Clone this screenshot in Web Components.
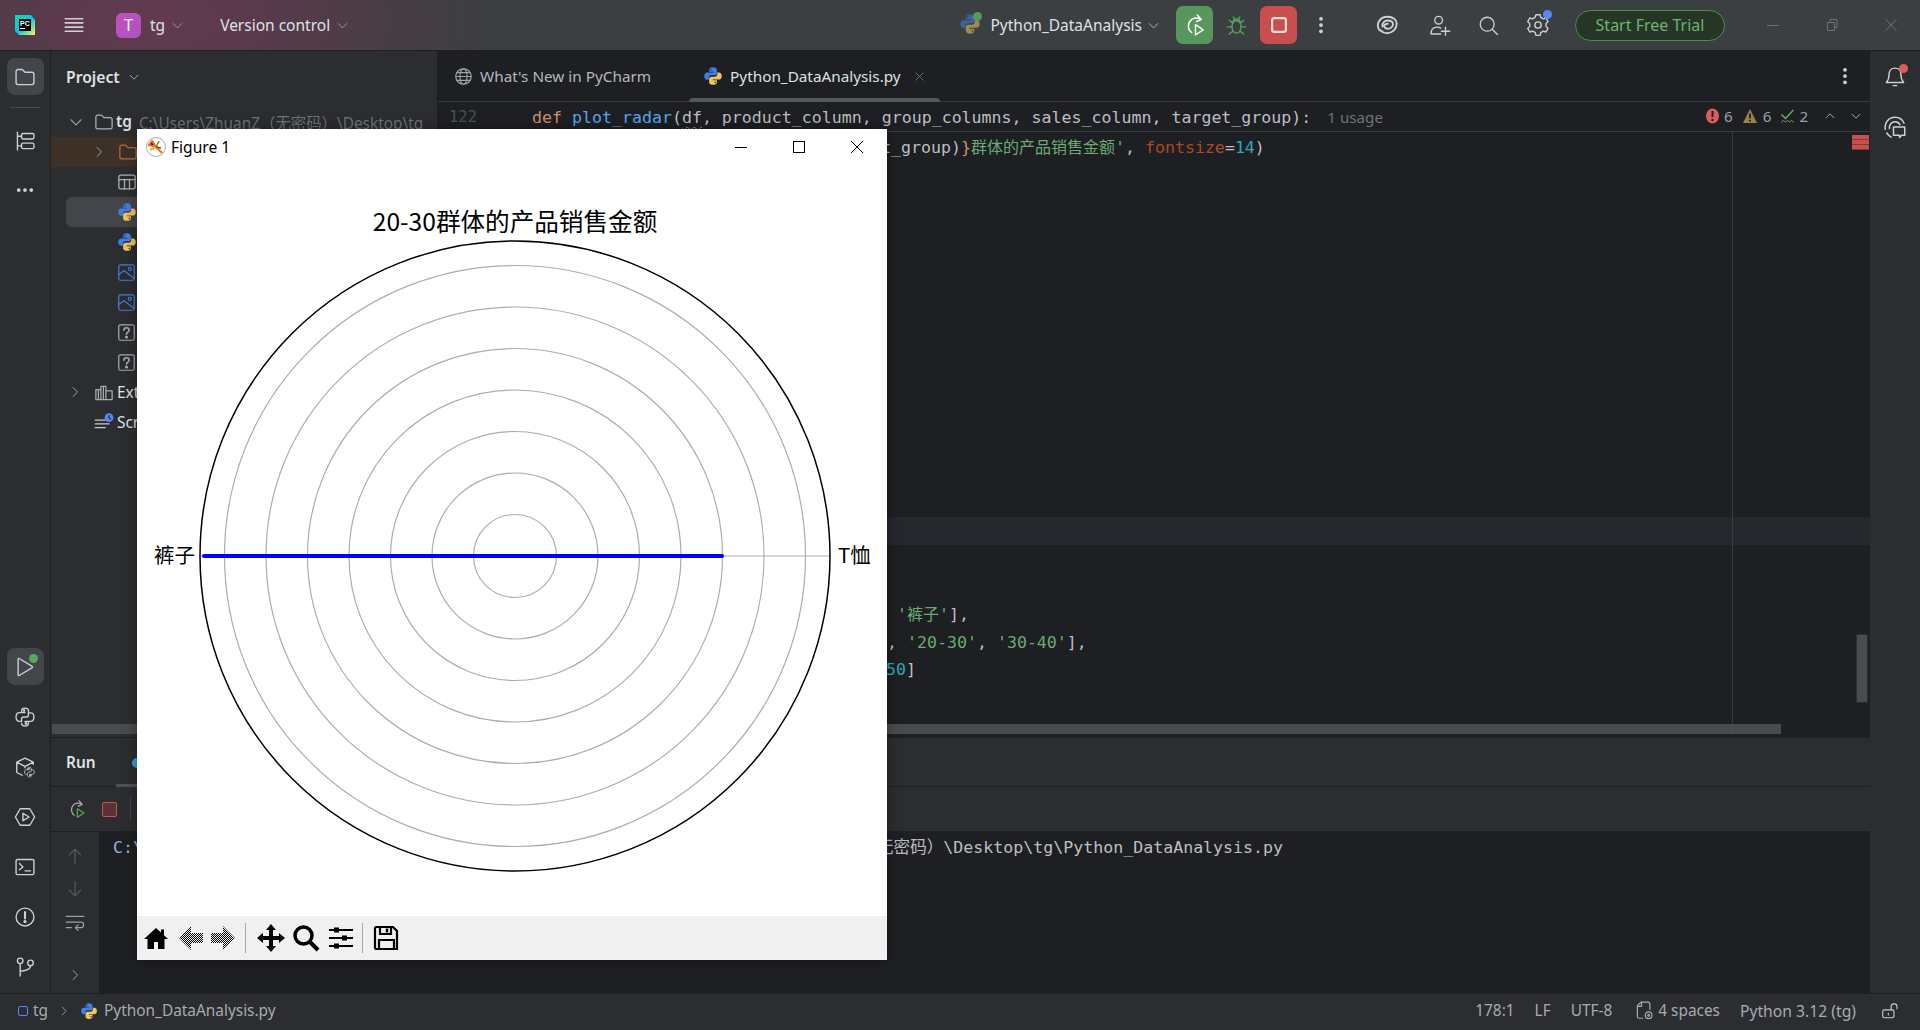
<!DOCTYPE html>
<html lang="zh"><head><meta charset="utf-8"><title>PyCharm</title>
<style>
html,body{margin:0;height:100%;overflow:hidden;background:#1e1f22}
body{font-family:"Noto Sans","Noto Sans CJK SC",sans-serif}
</style></head>
<body>
<ide-app></ide-app>
<script>
const UI='"Noto Sans","Noto Sans CJK SC",sans-serif';
const MONO='"DejaVu Sans Mono","Noto Sans CJK SC",monospace';
const PY='<path fill="#3d81e8" d="M8 1C5.600 1 4.900 2 4.900 3.100v1.500H8.200v.6H3.300C2 5.200 1 6.300 1 8.100c0 1.800 1 2.800 2.200 2.800h1.400V9.400c0-1.100 1-2 2.100-2h2.700c1 0 1.700-.8 1.700-1.700V3.100C11.100 2 10 1 8 1z"/><circle cx="6.200" cy="2.900" r=".6" fill="#2b2d30"/><path fill="#f2c55c" d="M8 15c2.400 0 3.100-1 3.100-2.100v-1.500H7.800v-.6h4.900c1.300 0 2.300-1.100 2.300-2.900 0-1.800-1-2.800-2.200-2.800h-1.400v1.500c0 1.100-1 2-2.100 2H6.600c-1 0-1.700.8-1.700 1.700v2.600C4.900 14 6 15 8 15z"/><circle cx="9.800" cy="13.100" r=".6" fill="#2b2d30"/>';
const OUTPY='<path d="M5.500 4.800V3.500c0-1.300 1-2 2.500-2s2.500.7 2.500 2v3c0 .9-.7 1.500-1.500 1.500H7c-.9 0-1.500.7-1.500 1.500v1.700H4c-1.500 0-2.500-1.200-2.500-3.200S2.500 4.800 4 4.800h4"/><path d="M10.500 11.200v1.300c0 1.300-1 2-2.500 2s-2.500-.7-2.500-2M10.500 5H12c1.500 0 2.500 1 2.500 3s-1 3.200-2.500 3.200H8"/><circle cx="7.300" cy="3.300" r=".5" fill="currentColor"/><circle cx="8.700" cy="12.700" r=".5" fill="currentColor"/>';
const ICONS={
 folder:'<path d="M1.500 4A1.500 1.500 0 0 1 3 2.500h3l2 2h5A1.500 1.500 0 0 1 14.500 6v6A1.500 1.500 0 0 1 13 13.500H3A1.500 1.500 0 0 1 1.500 12z"/>',
 structure:'<path d="M2.500 1.500v13M2.500 4.500h3M2.500 11.500h3"/><rect x="5.500" y="2.500" width="9" height="4" rx="1"/><rect x="5.500" y="9.500" width="9" height="4" rx="1"/>',
 more:'<circle cx="3" cy="8" r="1" fill="currentColor"/><circle cx="8" cy="8" r="1" fill="currentColor"/><circle cx="13" cy="8" r="1" fill="currentColor"/>',
 vmore:'<circle cx="8" cy="3" r="1" fill="currentColor"/><circle cx="8" cy="8" r="1" fill="currentColor"/><circle cx="8" cy="13" r="1" fill="currentColor"/>',
 run:'<path d="M3 2.200v11.600a.5.5 0 0 0 .8.4l9.500-5.800a.5.5 0 0 0 0-.8L3.800 1.800a.5.5 0 0 0-.8.4z"/>',
 pyconsole:OUTPY,
 packages:'<path d="M6 14 2 12V4.500L8 1.500l6 3v1.500M2 4.500l6 3 6-3M8 7.500v1"/><g transform="translate(6.800 7.300) scale(.55)">'+OUTPY+'</g>',
 services:'<path d="M4.500 2h7L15 8l-3.500 6h-7L1 8z"/><path d="M6.500 5.300v5.400L11 8z"/>',
 terminal:'<rect x="1.500" y="2.500" width="13" height="11" rx="1"/><path d="M4 5.500 6.500 8 4 10M8 10.800h4"/>',
 problems:'<circle cx="8" cy="8" r="6.500"/><path d="M8 4.300v4.700" stroke-width="1.500"/><circle cx="8" cy="11.300" r=".7" fill="currentColor"/>',
 git:'<circle cx="4.500" cy="3.500" r="2"/><circle cx="12" cy="5" r="2"/><path d="M4.500 5.500v9M4.500 11c4 0 7.500-1.500 7.500-4"/>',
 down:'<path d="m3.500 6 4.500 4.500L12.500 6"/>',
 up:'<path d="m3.500 10 4.500-4.500L12.500 10"/>',
 right:'<path d="m6 3.500 4.500 4.500L6 12.500"/>',
 close:'<path d="m3.500 3.500 9 9M12.500 3.500l-9 9"/>',
 burger:'<path d="M1 3h14M1 6.300h14M1 9.700h14M1 13h14" stroke-width="1.300"/>',
 table:'<rect x="1.500" y="2.500" width="13" height="11" rx="1.500"/><path d="M1.500 6h13M6 6v7.500M10 6v7.500"/>',
 image:'<rect x="1.500" y="1.500" width="13" height="13" rx="1.500"/><path d="M1.500 9.500 6 6.500l8.500 6.500"/><circle cx="10.800" cy="5" r="1.300"/>',
 unknown:'<rect x="1.500" y="1.500" width="13" height="13" rx="1.500"/><path d="M5.800 6.200C5.800 4.800 6.800 4 8 4s2.200.8 2.200 2c0 1.700-2.200 1.700-2.200 3.500" stroke-width="1.400"/><circle cx="8" cy="11.800" r=".8" fill="currentColor"/>',
 libs:'<path d="M1.500 6h4v8h-4zM5.500 3.500h4V14h-4zM9.500 7h5v7h-5zM3.500 6v8M7.500 3.500V14"/>',
 scratch:'<path d="M1 6.500h8M1 9.500h11M1 12.500h8"/><circle cx="12" cy="4.500" r="3.500" fill="#548af7" stroke="none"/><path d="M12 2.800v2l1.300.8" stroke="#2b2d30"/>',
 globe:'<circle cx="8" cy="8" r="6.500"/><path d="M1.500 8h13M2.500 4.700h11M2.500 11.300h11"/><ellipse cx="8" cy="8" rx="3" ry="6.500"/>',
 rerun:'<path d="M12 4.300A5.300 5.300 0 1 0 5.800 13M9.500 1.300l2.700 3-3.200 1.400"/><path stroke="var(--play,currentColor)" d="M8.300 7.800v6.800l5.200-3.400z"/>',
 bug:'<ellipse cx="8" cy="9" rx="3.500" ry="4.800"/><path d="M5.300 5.500C5.500 4 6.500 3 8 3s2.500 1 2.700 2.500M4.500 9H1M15 9h-3.500M5 6 2.500 4M11 6l2.500-2M5 12.500l-2.500 2M11 12.500l2.500 2M5.500 1.500l1 1.500M10.500 1.500l-1 1.500"/>',
 swirl:'<g stroke-width="1.250"><path d="M3 11.500C.5 8 2.500 2.500 8.500 2.500c3.500 0 6 2 6 4.500 0 3.500-3 6.500-6.500 6.500-2 0-3.500-1-4.500-2"/><path d="M5 9c-.5-2.500 1.500-4 3.500-4 2 0 3.500 1 3.500 2.500s-1.500 3-3.500 3c-1.500 0-2.500-1-2.300-2 .2-.8 1-1.300 2.300-1.300"/></g>',
 adduser:'<circle cx="7" cy="4.500" r="2.800"/><path d="M1.500 14.500c0-2.500.8-5 4.200-5 1 0 2 .2 2.800.8M1.500 14.500h7M12 9.500v6M9 12.500h6"/>',
 search:'<circle cx="7" cy="7" r="5.300"/><path d="m11 11 3.800 3.800"/>',
 gear:'<path d="M6.500 1.500h3l.5 2 1.800 1 2-.6 1.500 2.600-1.500 1.500v2l1.500 1.500-1.500 2.600-2-.6-1.800 1-.5 2h-3l-.5-2-1.800-1-2 .6L.5 11.500 2 10V8L.5 6.500 2 3.900l2 .6 1.800-1z" transform="translate(0 -1)"/><circle cx="8" cy="8" r="2.300"/>',
 bell:'<path d="M8 1.500c-2.800 0-4.300 2-4.300 4.500 0 3-.7 4.500-2 6h12.600c-1.300-1.500-2-3-2-6 0-2.500-1.500-4.500-4.300-4.500zM6.700 14.300h2.600"/>',
 assist:'<path d="M1.500 9.500C.8 5 4 1.500 8 1.500c3 0 5 1.500 6 4M4.300 9c-.3-2.500 1.400-4.500 3.700-4.500 1.500 0 2.700.7 3.300 2"/><path d="M7 8h7.500v5.500h-2L11 15v-1.500H7z"/><path d="M2.500 12c1 1.500 2 2.300 3 2.800"/>',
 up2:'<path d="M8 14V2.500M3.500 7 8 2.500 12.500 7"/>',
 down2:'<path d="M8 2v11.500M3.500 9 8 13.500 12.500 9"/>',
 wrap:'<path d="M1 3.500h14M1 8h12c2.500 0 2.500 4.500 0 4.500H8.500M10.500 10.300 8.300 12.500l2.200 2.200M1 12.500h4"/>',
 filecfg:'<path d="M6.500 14.500h-3A1.500 1.500 0 0 1 2 13V4l3-3h6a1.500 1.500 0 0 1 1.500 1.500V7M5.500 1v3.500H2"/><circle cx="11.500" cy="12" r="2.800"/><circle cx="11.500" cy="12" r=".8"/>',
 lock:'<rect x="1.500" y="7" width="10" height="7" rx="1.500"/><path d="M9 7V4.300a2.600 2.600 0 0 1 5.200 0V6M6.500 10v1.500"/>',
 dotsq:'<rect x="3" y="3" width="10" height="10" rx="1.500" stroke-width="1.600"/>',
 check:'<path d="m2 7 3.500 3.500L13 2.500" stroke-width="1.700"/><path d="M1.500 14l2-1.500 2 1.500 2-1.500 2 1.500 2-1.500 2 1.500" stroke-width="1"/>'
};
function mk(name,css,html){
  const t=document.createElement('template');
  t.innerHTML='<style>'+css+'</style>'+html;
  customElements.define(name,class extends HTMLElement{
    constructor(){super();this.attachShadow({mode:'open'}).appendChild(t.content.cloneNode(true));}
  });
}
customElements.define('ide-icon',class extends HTMLElement{
  connectedCallback(){
    const n=this.getAttribute('name'),s=this.getAttribute('size')||20,c=this.getAttribute('color')||'#ced0d6';
    const r=this.shadowRoot||this.attachShadow({mode:'open'});
    r.innerHTML='<style>:host{display:inline-flex;flex:none;color:'+c+';width:'+s+'px;height:'+s+'px}svg{display:block;width:100%;height:100%;overflow:visible}</style><svg viewBox="0 0 16 16" fill="none" stroke="currentColor" stroke-width="1" stroke-linecap="round" stroke-linejoin="round">'+(n==='python'?'<g stroke="none">'+PY+'</g>':ICONS[n])+'</svg>';
  }
});
mk('ide-titlebar',`
:host{display:flex;align-items:center;height:50px;border-bottom:1px solid #1e1f22;color:#dfe1e5;font:15.500px ${UI};
 background:radial-gradient(ellipse 340px 150px at 150px 20px,#633a50 0,#5a3a4b 30%,rgba(60,63,65,0) 100%),#3c3f41}
.logo{width:20px;height:20px;margin-left:15px;flex:none}
.burger{margin-left:29px}
.av{margin-left:32px;width:25px;height:25px;border-radius:6px;background:linear-gradient(135deg,#c64fb6,#a955c5);display:flex;align-items:center;justify-content:center;color:#fff;font-size:16px}
.tg{margin-left:9px}
.chev{margin-left:5px}
.vc{margin-left:34px}
.right{margin-left:auto;display:flex;align-items:center;height:100%}
.pl{position:relative;width:22px;height:24px;margin-right:9px}
.pl i{position:absolute;right:-1px;top:-1px;width:9px;height:9px;border-radius:50%;background:#57965c}
.pl ide-icon{opacity:.55}
.btn{width:37px;height:38px;border-radius:7px;display:flex;align-items:center;justify-content:center}
.green{background:#57965c}
.red{background:#c94f4f}
.trial{margin:0 0 0 26px;width:148px;height:29px;border:1.500px solid #4e8a52;background:#253627;border-radius:16px;display:flex;align-items:center;justify-content:center;color:#6db46f;font-size:16px}
.win{display:flex;width:177px;margin-left:18px}
.win span{flex:1;display:flex;justify-content:center}
`,`
<svg class="logo" viewBox="0 0 20 20"><defs><linearGradient id="a" x1="0" y1="0" x2="1" y2="1"><stop offset="0" stop-color="#21d789"/><stop offset=".5" stop-color="#07c3f2"/><stop offset="1" stop-color="#fcf84a"/></linearGradient></defs><path d="M0 0h16l4 5v15H4l-4-4z" fill="url(#a)"/><rect x="4" y="4" width="12" height="12" fill="#000"/><text x="5" y="10.500" font-size="7" fill="#fff" font-family="Liberation Sans" font-weight="700">PC</text><rect x="5" y="13" width="5" height="1" fill="#fff"/></svg>
<ide-icon class="burger" name="burger" size="20"></ide-icon>
<div class="av">T</div><span class="tg">tg</span><ide-icon class="chev" name="down" size="15" color="#9da0a8"></ide-icon>
<span class="vc" style="margin-left:35px">Version control</span><ide-icon class="chev" name="down" size="15" color="#9da0a8"></ide-icon>
<div class="right">
 <div class="pl"><ide-icon name="python" size="22"></ide-icon><i></i></div>
 <span>Python_DataAnalysis</span><ide-icon style="margin:0 0 0 4px" name="down" size="15" color="#b4b8bf"></ide-icon>
 <div class="btn green" style="margin-left:15px"><ide-icon name="rerun" size="24" color="#fff"></ide-icon></div>
 <ide-icon style="margin:0 13px 0 13px" name="bug" size="21" color="#57a85c"></ide-icon>
 <div class="btn red"><ide-icon name="dotsq" size="22" color="#f4dede"></ide-icon></div>
 <ide-icon style="margin:0 0 0 14px" name="vmore" size="20"></ide-icon>
 <ide-icon style="margin:0 0 0 44px" name="swirl" size="24"></ide-icon>
 <ide-icon style="margin:0 0 0 30px" name="adduser" size="22"></ide-icon>
 <ide-icon style="margin:0 0 0 27px" name="search" size="21"></ide-icon>
 <span style="position:relative;display:inline-flex;margin-left:28px"><ide-icon name="gear" size="22"></ide-icon><i style="position:absolute;right:-3px;top:-4px;width:9px;height:9px;border-radius:50%;background:#548af7"></i></span>
 <div class="trial">Start Free Trial</div>
 <div class="win"><span><svg width="14" height="14"><path d="M1 7.500h12" stroke="#6f7275"/></svg></span><span><svg width="14" height="14" fill="none" stroke="#6f7275"><path d="M2.500 4.500h7v8h-7zM5 4.500v-3h7v8h-2.500"/></svg></span><span><svg width="14" height="14" stroke="#6f7275"><path d="m1.500 1 11 12M12.500 1l-11 12"/></svg></span></div>
</div>`);
mk('ide-toolstripe',`
:host{display:flex;flex-direction:column;align-items:center;background:#2b2d30;box-sizing:border-box;height:100%}
:host([side=left]){border-right:1px solid #1e1f22;width:51px;padding:7px 0 0 0}
:host([side=right]){width:50px;padding:7px 0 0}
::slotted(*){flex:none}
`,`<slot></slot>`);
mk('ide-stripebtn',`
:host{display:flex;width:37px;height:37px;border-radius:8px;align-items:center;justify-content:center;position:relative;margin-bottom:13px}
:host([active]){background:#43454a}
:host([dot]) i{display:block}
i{display:none;position:absolute;width:9px;height:9px;border-radius:50%;right:6px;top:6px;background:var(--dot,#57a85c)}
`,`<slot></slot><i></i>`);
mk('tree-row',`
:host{display:flex;align-items:center;height:30px;padding-left:var(--in,0px);white-space:nowrap;color:#dfe1e5;font:15.400px ${UI};box-sizing:border-box}
:host([sel]){background:#43454a;border-radius:6px;margin-left:15px;padding-left:calc(var(--in,0px) - 15px)}
:host([hl]){background:#3d3026}
.ch{width:27px;display:flex;justify-content:flex-start;flex:none}
`,`<span class="ch"><slot name="chev"></slot></span><slot name="ic"></slot><span style="margin-left:3px;display:inline-flex;gap:9px"><slot></slot></span>`);
mk('ide-project',`
:host{display:block;width:386px;background:#2b2d30;position:relative;height:100%;border-right:1px solid #1e1f22;overflow:hidden}
.h{height:56px;display:flex;align-items:center;padding:1px 0 5px 15px;font:600 15.700px ${UI};color:#dfe1e5;gap:7px;box-sizing:border-box}
.sb{position:absolute;left:1px;width:300px;height:10px;bottom:3px;background:#494b4e}
`,`<div class="h">Project<ide-icon name="down" size="14" color="#b4b8bf"></ide-icon></div>
<tree-row style="--in:16px"><ide-icon slot="chev" name="down" size="18" color="#9da0a8"></ide-icon><ide-icon slot="ic" name="folder" size="20" color="#afb1b3"></ide-icon><b style="font-weight:600;margin-left:-1px">tg</b><span style="color:#6f737a;margin-left:-2px">C:\\Users\\ZhuanZ（无密码）\\Desktop\\tg</span></tree-row>
<tree-row hl style="--in:40px"><ide-icon slot="chev" name="right" size="16" color="#9da0a8"></ide-icon><ide-icon slot="ic" name="folder" size="20" color="#b26e4a"></ide-icon></tree-row>
<tree-row style="--in:39px"><ide-icon slot="ic" name="table" size="20" color="#afb1b3"></ide-icon></tree-row>
<tree-row sel style="--in:39px"><ide-icon slot="ic" name="python" size="20"></ide-icon></tree-row>
<tree-row style="--in:39px"><ide-icon slot="ic" name="python" size="20"></ide-icon></tree-row>
<tree-row style="--in:39px"><ide-icon slot="ic" name="image" size="19" color="#4c7cd6"></ide-icon></tree-row>
<tree-row style="--in:39px"><ide-icon slot="ic" name="image" size="19" color="#4c7cd6"></ide-icon></tree-row>
<tree-row style="--in:39px"><ide-icon slot="ic" name="unknown" size="19" color="#a9abaf"></ide-icon></tree-row>
<tree-row style="--in:39px"><ide-icon slot="ic" name="unknown" size="19" color="#a9abaf"></ide-icon></tree-row>
<tree-row style="--in:16px"><ide-icon slot="chev" name="right" size="16" color="#9da0a8"></ide-icon><ide-icon slot="ic" name="libs" size="20" color="#a9abaf"></ide-icon>External Libraries</tree-row>
<tree-row style="--in:16px"><ide-icon slot="ic" name="scratch" size="20" color="#c8cacf"></ide-icon>Scratches and Consoles</tree-row>
<div class="sb"></div>`);
mk('ide-tabs',`
:host{display:flex;height:51px;border-bottom:1px solid #393b40;box-sizing:border-box;align-items:center;font:15.300px ${UI};color:#b4b8bf;position:relative;padding:0 0 0 16px}
.t{display:flex;align-items:center;gap:7px}
.a{color:#dfe1e5;margin-left:52px}
.u{position:absolute;left:251px;width:251px;height:4px;bottom:-1px;background:#55585e;border-radius:4px 4px 0 0}
.m{position:absolute;right:15px;top:15px}
`,`<div class="t"><ide-icon name="globe" size="19" color="#9da0a8"></ide-icon>What's New in PyCharm</div>
<div class="t a"><ide-icon name="python" size="20"></ide-icon>Python_DataAnalysis.py<ide-icon style="margin-left:5px" name="close" size="13" color="#7b7e85"></ide-icon></div><i class="u"></i><ide-icon class="m" name="vmore" size="20"></ide-icon>`);
mk('ide-code',`
:host{display:block;position:relative;flex:1;background:#1e1f22;font:16.600px/27px ${MONO};color:#bcbec4;overflow:hidden}
.st{height:28px;border-bottom:1px solid #393b40;display:flex;align-items:center;position:relative;background:#1e1f22;padding-top:1px;box-sizing:content-box;margin-bottom:-1px;white-space:pre}
.n{width:37px;margin-left:11px;color:#4b5059;font-size:15.500px}
.st .c{margin-left:46px}
.u{font:15.200px ${UI};color:#6f737a;margin-left:16px}
.k{color:#cf8e6d}.f{color:#56a8f5}.s{color:#6aab73}.p{color:#aa4926}.d{color:#2aacb8}
.z{font-size:16px}
.w{text-decoration:underline wavy #a88f48;text-decoration-thickness:1px;text-underline-offset:3px}
.l2,.l3,.l4,.l5{white-space:pre}
.l2{padding-left:443px;height:27px;margin-top:3px}
.band{margin-top:356px;height:28px;background:#26282e}
.l3{margin-top:56px;height:27px;padding-left:459px}
.l4{height:27px;padding-left:449px;margin-top:1px}
.l5{height:27px;padding-left:448px}
.v{position:absolute;left:1294px;top:29px;bottom:2px;width:1px;background:#393b40}
.insp{position:absolute;right:0;top:0;width:174px;height:28px;background:#1e1f22;display:flex;align-items:center;font:15.200px ${UI};color:#9da0a8;padding-left:9px;box-sizing:border-box}
.mark{position:absolute;right:1px;top:33px;width:17px;height:15px;background:repeating-linear-gradient(#c94f4f 0 4px,#7d3a3a 4px 5px)}
.th{position:absolute;right:3px;top:533px;width:10px;height:67px;background:#4a4b4d;outline:1px solid #2b2d30}
.hb{position:absolute;left:0;top:622px;width:1343px;height:10px;background:#4a4b4d}
`,`<div class="st"><span class="n">122</span><span class="c"><span class="k">def</span> <span class="f">plot_radar</span>(<span class="w">df</span>, product_column, group_columns, sales_column, target_group):</span><span class="u">1 usage</span></div>
<div class="l2">t_group)<span class="k">}</span><span class="s z">群体的产品销售金额</span><span class="s">'</span>, <span class="p">fontsize</span>=<span class="d">14</span>)</div>
<div class="band"></div>
<div class="l3"><span class="s">'</span><span class="s z">裤子</span><span class="s">'</span>],</div>
<div class="l4">, <span class="s">'20-30'</span>, <span class="s">'30-40'</span>],</div>
<div class="l5"><span class="d">50</span>]</div>
<i class="v"></i>
<div class="insp"><svg width="15" height="18" viewBox="0 0 15 18"><ellipse cx="7.500" cy="9" rx="6.500" ry="7.500" fill="#db5c5c"/><path d="M7.500 4v6" stroke="#1e1f22" stroke-width="2"/><circle cx="7.500" cy="13" r="1.200" fill="#1e1f22"/></svg><span style="margin:0 9px 0 4px">6</span><svg width="16" height="18" viewBox="0 0 16 18"><path d="M8 2 15 16H1z" fill="#9c8344"/><path d="M8 6.500v5" stroke="#1e1f22" stroke-width="1.800"/><circle cx="8" cy="13.700" r="1" fill="#1e1f22"/></svg><span style="margin:0 9px 0 5px">6</span><ide-icon name="check" size="16" color="#5fa565"></ide-icon><span style="margin:0 15px 0 3px">2</span><ide-icon name="up" size="14" color="#b4b8bf"></ide-icon><ide-icon style="margin-left:12px" name="down" size="14" color="#b4b8bf"></ide-icon></div>
<i class="mark"></i><i class="th"></i><i class="hb"></i>`);
mk('ide-run',`
:host{display:block;height:256px;font:15.400px ${UI};color:#dfe1e5;box-sizing:border-box;border-top:1px solid #1e1f22}
.tabs{height:49px;background:#2b2d30;border-bottom:1px solid #1e1f22;display:flex;align-items:center;padding:1px 0 0 15px;font-weight:600;position:relative;box-sizing:border-box}
.ul{position:absolute;left:65px;width:60px;bottom:-1px;height:3px;background:#4e5157}
.pd{position:absolute;left:81px;top:20px;width:10px;height:10px;border-radius:50%;background:#3b9ad9}
.bar{height:44px;background:#2b2d30;border-bottom:1px solid #1e1f22;display:flex;align-items:center;padding-left:16px}
.stop{margin-left:15px;width:15px;height:15px;background:#5a3434;border:1.500px solid #c75450;border-radius:2px;box-sizing:border-box}
.sep{margin-left:13px;width:1px;height:24px;background:#43454a}
.body{display:flex;height:161px;background:#1e1f22}
.side{width:48px;background:#2b2d30;display:flex;flex-direction:column;align-items:center;padding-top:14px;box-sizing:border-box;gap:13px}
.con{padding:0 0 0 14px;font:16.600px/32px ${MONO};color:#bcbec4;white-space:pre;display:flex}
.con span:first-child{width:764px;display:block;color:#8fb4dc}
`,`<div class="tabs">Run<i class="pd"></i><i class="ul"></i></div>
<div class="bar"><ide-icon name="rerun" size="20" color="#a5a8ae" style="--play:#57a85c"></ide-icon><i class="stop"></i><i class="sep"></i></div>
<div class="body"><div class="side"><ide-icon name="up2" size="20" color="#55585e"></ide-icon><ide-icon name="down2" size="20" color="#55585e"></ide-icon><ide-icon name="wrap" size="20" color="#9da0a8"></ide-icon><ide-icon style="margin-top:22px" name="right" size="16" color="#9da0a8"></ide-icon></div>
<div class="con"><span>C:\\Users\\ZhuanZ（</span><span>无密码）\\Desktop\\tg\\Python_DataAnalysis.py</span></div></div>`);
mk('ide-status',`
:host{display:flex;height:37px;background:#2b2d30;align-items:center;font:15.400px ${UI};color:#a8abb1;padding:0 0 3px 18px;grid-column:1/-1;border-top:1px solid #1e1f22;box-sizing:border-box}
.sq{width:10px;height:10px;border:1.500px solid #548af7;border-radius:2px;box-sizing:border-box;margin-right:5px}
.r{margin-left:auto;display:flex;align-items:center}
`,`<i class="sq"></i><span>tg</span><ide-icon style="margin:0 9px 0 9px" name="right" size="14" color="#9da0a8"></ide-icon><ide-icon name="python" size="18"></ide-icon><span style="margin-left:6px">Python_DataAnalysis.py</span>
<div class="r"><span>178:1</span><span style="margin-left:20px">LF</span><span style="margin-left:20px">UTF-8</span><ide-icon style="margin:0 4px 0 23px" name="filecfg" size="19" color="#a8abb1"></ide-icon><span>4 spaces</span><span style="margin-left:20px;font-size:15.700px">Python 3.12 (tg)</span><ide-icon style="margin:0 21px 0 25px" name="lock" size="18" color="#c8cacf"></ide-icon></div>`);
mk('figure-window',`
:host{position:absolute;z-index:10;left:137px;top:129px;width:750px;height:831px;background:#fff;display:flex;flex-direction:column;box-shadow:0 0 14px rgba(0,0,0,.35);color:#000;font-family:"Noto Sans","Noto Sans CJK SC",sans-serif}
.t{height:38px;display:flex;align-items:center;font-size:15.600px;padding:0 0 2px 9px;flex:none;box-sizing:border-box}
.ctl{margin-left:auto;display:flex;margin-right:1px}
.ctl span{width:58px;height:36px;display:flex;align-items:center;justify-content:center}
.plot{flex:1;min-height:0}
.plot svg{display:block}
.bar{height:44px;flex:none;background:#f0f0f0;display:flex;align-items:center;padding-left:1px}
.bar b{width:35px;height:44px;display:flex;align-items:center;justify-content:center;flex:none}
.bar i{width:1px;height:30px;background:#a9a9a9;flex:none;margin:0 1px}
`,`<div class="t"><svg width="20" height="20" viewBox="0 0 20 20" style="margin-right:5px"><circle cx="10" cy="10" r="9.500" fill="#fff" stroke="#aaa"/><path d="M3 8l7 2-4-6zM10 10l6 6" stroke="#e8711b" stroke-width="2"/><path d="M10 10 4 13" stroke="#f2b01e" stroke-width="2.500"/><path d="M10 10l3-6" stroke="#4c9a2a" stroke-width="1.500"/><path d="M10 10l5 1" stroke="#b22" stroke-width="1.500"/></svg>Figure 1
<div class="ctl"><span><svg width="12" height="12"><path d="M0 6.500h12" stroke="#000"/></svg></span><span><svg width="12" height="12" fill="none"><rect x=".5" y=".5" width="11" height="11" stroke="#000"/></svg></span><span><svg width="14" height="14"><path d="m1 1 12 12M13 1 1 13" stroke="#000"/></svg></span></div></div>
<div class="plot"><svg width="750" height="749" viewBox="0 0 750 749">
<g fill="none" stroke="#adadad" stroke-width="1.200"><circle cx="378" cy="389" r="41.500"/><circle cx="378" cy="389" r="83"/><circle cx="378" cy="389" r="124.500"/><circle cx="378" cy="389" r="166"/><circle cx="378" cy="389" r="207.500"/><circle cx="378" cy="389" r="249"/><circle cx="378" cy="389" r="290.500"/><path d="M63 389h630"/></g>
<circle cx="378" cy="389" r="315" fill="none" stroke="#000" stroke-width="1.500"/>
<path d="M67 389H585" stroke="#0000ff" stroke-width="4" stroke-linecap="round"/>
<g font-family="Noto Sans CJK SC,Noto Sans,sans-serif" fill="#000"><text x="378" y="64" font-size="24.600" text-anchor="middle">20-30群体的产品销售金额</text><text x="17" y="396" font-size="20.500">裤子</text><text x="701" y="396" font-size="20.500">T恤</text></g></svg></div>
<div class="bar">
<b><svg width="26" height="26" viewBox="0 0 26 26"><path d="M13 3 1 14h3.500v10h6.500v-7h4v7h6.500V14H25l-4-3.700V4.500h-3v3z"/></svg></b>
<b><svg width="26" height="26" viewBox="0 0 26 26"><defs><pattern id="ht" width="2" height="2" patternUnits="userSpaceOnUse"><rect width="1" height="1"/><rect x="1" y="1" width="1" height="1"/></pattern></defs><path fill="url(#ht)" d="M13 1 1 13l12 12v-7h12V8H13z"/></svg></b>
<b style="margin-left:-3px"><svg width="26" height="26" viewBox="0 0 26 26"><path fill="url(#ht)" d="M13 1l12 12-12 12v-7H1V8h12z"/></svg></b>
<i style="margin-left:5px"></i>
<b style="margin-left:6px"><svg width="30" height="30" viewBox="0 0 30 30"><path d="M15 1l5 6h-3v6h6v-3l6 5-6 5v-3h-6v6h3l-5 6-5-6h3v-6H7v3l-6-5 6-5v3h6V7h-3z"/></svg></b>
<b><svg width="28" height="28" viewBox="0 0 28 28" fill="none" stroke="#000"><circle cx="11.500" cy="11.500" r="8.500" stroke-width="3.500"/><path d="m18 18 8 8" stroke-width="4"/></svg></b>
<b><svg width="26" height="26" viewBox="0 0 26 26" stroke="#000" stroke-width="2"><path d="M1 5h24M1 13h24M1 21h24"/><path d="M6 2.500h5v5H6zM14 10.500h5v5h-5zM6 18.500h5v5H6z" fill="#000" stroke="none"/></svg></b>
<i style="margin-left:4px"></i>
<b style="margin-left:4px"><svg width="26" height="26" viewBox="0 0 26 26" fill="none" stroke="#000" stroke-width="2.200"><path d="M3 2h17l4 4v18H3a1 1 0 0 1-1-1V3a1 1 0 0 1 1-1z"/><path d="M7 2v7h11V2M6 24v-9h15v9"/><path d="M14 3.500v4" stroke-width="2.500"/></svg></b>
</div>`);
mk('ide-app',`
:host{display:grid;grid-template-columns:51px 1fr 50px;grid-template-rows:51px 942px 37px;width:1920px;height:1030px;position:relative;overflow:hidden;background:#1e1f22}
ide-titlebar{grid-column:1/-1}
.mid{display:flex;flex-direction:column;min-width:0}
.top{height:686px;display:flex;min-height:0}
.ed{flex:1;display:flex;flex-direction:column;min-width:0}
.sep{width:30px;height:1px;background:#4a4c50;flex:none}
`,`<ide-titlebar></ide-titlebar>
<ide-toolstripe side="left">
 <ide-stripebtn active><ide-icon name="folder" size="22"></ide-icon></ide-stripebtn>
 <div class="sep" style="margin-bottom:14px;margin-top:-1px"></div>
 <ide-stripebtn style="margin-bottom:12px"><ide-icon name="structure" size="22"></ide-icon></ide-stripebtn>
 <ide-stripebtn style="margin-bottom:440px"><ide-icon name="more" size="20"></ide-icon></ide-stripebtn>
 <ide-stripebtn active dot style="--dot:#57a85c"><ide-icon name="run" size="22"></ide-icon></ide-stripebtn>
 <ide-stripebtn><ide-icon name="pyconsole" size="22"></ide-icon></ide-stripebtn>
 <ide-stripebtn><ide-icon name="packages" size="22"></ide-icon></ide-stripebtn>
 <ide-stripebtn><ide-icon name="services" size="22"></ide-icon></ide-stripebtn>
 <ide-stripebtn><ide-icon name="terminal" size="22"></ide-icon></ide-stripebtn>
 <ide-stripebtn><ide-icon name="problems" size="22"></ide-icon></ide-stripebtn>
 <ide-stripebtn><ide-icon name="git" size="22"></ide-icon></ide-stripebtn>
</ide-toolstripe>
<div class="mid"><div class="top"><ide-project></ide-project><div class="ed"><ide-tabs></ide-tabs><ide-code></ide-code></div></div><ide-run></ide-run></div>
<ide-toolstripe side="right">
 <ide-stripebtn dot style="--dot:#db5c5c"><ide-icon name="bell" size="22"></ide-icon></ide-stripebtn>
 <ide-stripebtn><ide-icon name="assist" size="24"></ide-icon></ide-stripebtn>
</ide-toolstripe>
<ide-status></ide-status>
<figure-window></figure-window>`);
</script>
</body></html>
